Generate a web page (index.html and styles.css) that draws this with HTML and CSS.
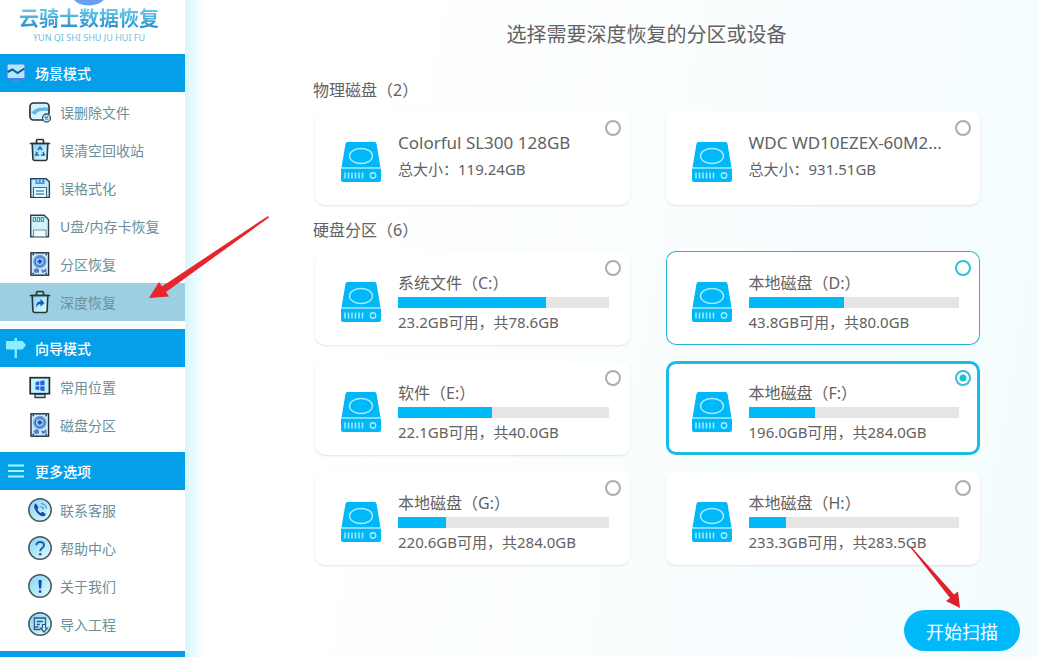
FILE: index.html
```html
<!DOCTYPE html>
<html lang="zh-CN">
<head>
  <meta charset="UTF-8">
  <meta name="viewport" content="width=device-width, initial-scale=1.0">
  <title>云骑士数据恢复</title>
  <link rel="stylesheet" href="styles.css">
</head>
<body>
  <!-- Shared icons -->
  <svg class="defs" aria-hidden="true">
    <defs>
      <linearGradient id="aqua" x1="0" y1="0" x2="1" y2="1">
        <stop offset="0" stop-color="#7fd4f7"/>
        <stop offset="1" stop-color="#e4fff8"/>
      </linearGradient>
    </defs>
    <symbol id="disk" viewBox="0 0 40 40">
      <path d="M6.500 0h27a2 2 0 0 1 2 1.700L39.500 25.500H.5L4.500 1.700A2 2 0 0 1 6.500 0z" fill="#00b7f8"/>
      <path d="M0 26.500h40V38a2 2 0 0 1-2 2H2a2 2 0 0 1-2-2z" fill="#00b7f8"/>
      <ellipse cx="20" cy="14" rx="11.500" ry="7.500" fill="none" stroke="#a5eaff" stroke-width="1.400"/>
      <path d="M4 30.500v6M7.500 30.500v6M11 30.500v6M14.500 30.500v6M18 30.500v6M21.500 30.500v6" stroke="#a5eaff" stroke-width="1.500"/>
      <circle cx="32" cy="33.500" r="2.700" fill="none" stroke="#a5eaff" stroke-width="1.400"/>
    </symbol>
    <symbol id="hdd" viewBox="0 0 24 24">
      <rect x="3" y="0.800" width="17.600" height="22.400" fill="#c5eafa" stroke="#222f45" stroke-width="1.400"/>
      <circle cx="11.800" cy="9.500" r="6.700" fill="#6f9fe0"/>
      <circle cx="11.800" cy="9.500" r="4.500" fill="#8bcdf2" stroke="#3b5cae"/>
      <path d="M11.800 7l2.500 2.500-2.500 2.500-2.500-2.500z" fill="#2447bd"/>
      <path d="M5.500 18l3-2 2.500 1.500v3l-4 .5zM13 17.500l3 .5 2-2 .5 3.500-4 1.500z" fill="#557bc5"/>
      <path d="M4.500 2.500h1.500M17.500 2.500h1.500M4.500 21.500h1.500M17.500 21.500h1.500" stroke="#222f45" stroke-width="1.300"/>
    </symbol>
    <symbol id="trash" viewBox="0 0 24 24">
      <path d="M4.200 5.500h15.600l-.7 15q-.2 2-2 2H6.900q-1.800 0-2-2z" fill="url(#aqua)" stroke="#2c343b" stroke-width="1.600"/>
      <path d="M2.500 5.500h19M8.500 5V2.700q0-1.200 1.200-1.200h4.600q1.200 0 1.200 1.200V5" fill="none" stroke="#2c343b" stroke-width="1.700" stroke-linecap="round"/>
    </symbol>
  </svg>

  <div class="app">
    <aside class="sidebar">
      <div class="brand">
        <svg class="brand-mark" viewBox="0 0 36 8" aria-hidden="true">
          <path d="M5-4C7 4 28 4 31-4" fill="none" stroke="#6b9df0" stroke-width="7"/>
        </svg>
        <div class="brand-name">云骑士数据恢复</div>
        <div class="brand-sub">YUN QI SHI SHU JU HUI FU</div>
      </div>

      <nav>
        <section class="menu">
          <h2 class="menu-title">
            <svg class="menu-icon" viewBox="0 0 20 20" aria-hidden="true">
              <rect x="1" y="1" width="18" height="14.500" rx="1" fill="#ace9fb" stroke="#4680e8" stroke-width="1.200"/>
              <path d="M1.500 9l5-2.500 5 3.500 7-4.500" fill="none" stroke="#214fae" stroke-width="2"/>
              <path d="M6 18h8" stroke="#5487ef" stroke-width="1.500"/>
            </svg>
            场景模式
          </h2>
          <ul class="menu-list">
            <li><a class="menu-item" href="#">
              <svg class="item-icon" viewBox="0 0 24 24" aria-hidden="true">
                <path d="M16 20H5.500A3.500 3.500 0 0 1 2 16.500v-10A3.500 3.500 0 0 1 5.500 3h12A3.500 3.500 0 0 1 21 6.500V14" fill="#d4f4ff" stroke="#2c343b" stroke-width="1.700"/>
                <path d="M3.500 12.500C8 7 13 7.500 20 7.500V11c-7-1-11 0-13 4" fill="#66b4df"/>
                <circle cx="18.500" cy="18" r="4" fill="#bdeafb" stroke="#40536b" stroke-width="1.300"/>
                <path d="M17 16.500l3 3M20 16.500l-3 3" stroke="#3478d0" stroke-width="1.200"/>
              </svg>
              误删除文件</a></li>
            <li><a class="menu-item" href="#">
              <svg class="item-icon" viewBox="0 0 24 24" aria-hidden="true">
                <use href="#trash"/>
                <path d="M10 12l2-3 2 3M15 14l1.300 3H13M11 17H7.700L9.300 14" fill="none" stroke="#2862c8" stroke-width="1.600"/>
              </svg>
              误清空回收站</a></li>
            <li><a class="menu-item" href="#">
              <svg class="item-icon" viewBox="0 0 24 24" aria-hidden="true">
                <path d="M2.700 2.700h15.500l3.200 3.200v15.500H2.700z" fill="#c2effb" stroke="#2b3f52" stroke-width="1.400"/>
                <path d="M7.500 3v5h9V3z" fill="#4c92e0"/>
                <path d="M10 3.500v3M13.500 3.500v3" stroke="#d4f4ff" stroke-width="1.200"/>
                <path d="M5.500 21v-9.500h13V21" fill="#e8fbff" stroke="#4b6a84" stroke-width="1.200"/>
                <path d="M8 15h8M8 18h8" stroke="#4b8fd8" stroke-width="1.500"/>
              </svg>
              误格式化</a></li>
            <li><a class="menu-item" href="#">
              <svg class="item-icon" viewBox="0 0 24 24" aria-hidden="true">
                <path d="M2.700 1.200h13.500l4.300 4.300v17.300H2.700z" fill="#d0f5fb" stroke="#2b3f52" stroke-width="1.400"/>
                <path d="M5.300 3.500h2.200v4H5.300zM9.300 3.500h2.200v4H9.300zM13.300 3.500h2.200v4h-2.200z" fill="none" stroke="#478ddc" stroke-width="1.200"/>
                <path d="M5.500 22.500v-6.500h12.500v6.500" fill="#f2fdff" stroke="#7894a5" stroke-width="1.200"/>
              </svg>
              U盘/内存卡恢复</a></li>
            <li><a class="menu-item" href="#">
              <svg class="item-icon" viewBox="0 0 24 24" aria-hidden="true"><use href="#hdd"/></svg>
              分区恢复</a></li>
            <li><a class="menu-item active" href="#" aria-current="page">
              <svg class="item-icon" viewBox="0 0 24 24" aria-hidden="true">
                <use href="#trash"/>
                <path d="M8 18c0-4.500 1.500-6.500 4.500-6.500V9l4 4-4 3.500V14c-2 0-3.500 1-4.500 4z" fill="#1d52c0"/>
              </svg>
              深度恢复</a></li>
          </ul>
        </section>

        <section class="menu">
          <h2 class="menu-title">
            <svg class="menu-icon" viewBox="0 0 20 20" aria-hidden="true">
              <path d="M8.500 0h2.500v20H8.500z" fill="#7cecff"/>
              <path d="M0 3h16.500l3.500 4-3.500 4.500H0z" fill="#8deeff"/>
            </svg>
            向导模式
          </h2>
          <ul class="menu-list">
            <li><a class="menu-item" href="#">
              <svg class="item-icon" viewBox="0 0 24 24" aria-hidden="true">
                <path d="M7 19h10v3.500H7z" fill="#c5f0fa" stroke="#2c3c4d" stroke-width="1.300"/>
                <rect x="2.200" y="2.700" width="19.200" height="16" fill="#c5f3fd" stroke="#222d3a" stroke-width="1.700"/>
                <path d="M7.500 7l3.800-.7v4H7.500zM12.300 6l4.200-.7v5h-4.200zM7.500 11.300h3.800v4l-3.800-.7zM12.300 11.300h4.200v5l-4.200-.7z" fill="#2563e0"/>
              </svg>
              常用位置</a></li>
            <li><a class="menu-item" href="#">
              <svg class="item-icon" viewBox="0 0 24 24" aria-hidden="true"><use href="#hdd"/></svg>
              磁盘分区</a></li>
          </ul>
        </section>

        <section class="menu">
          <h2 class="menu-title">
            <svg class="menu-icon" viewBox="0 0 20 20" aria-hidden="true">
              <path d="M2 4.500h16M2 10h16M2 15.500h16" stroke="#a9f2ff" stroke-width="2"/>
            </svg>
            更多选项
          </h2>
          <ul class="menu-list">
            <li><a class="menu-item" href="#">
              <svg class="item-icon" viewBox="0 0 24 24" aria-hidden="true">
                <circle cx="12" cy="12" r="11.200" fill="url(#aqua)" stroke="#465a60" stroke-width="1.500"/>
                <path d="M8 5.500c-2 1-2.500 3-1 6 1.700 3.500 4 5.700 7 6.700 2 .5 3.500-.7 3.700-2.200l-3.200-2.200-1.800 1.300c-1.500-.8-2.800-2.300-3.300-3.800l1.300-1.500z" fill="#1b46bd"/>
                <path d="M12.500 8.500q2.500.3 3 3M13 5.500q4.500.5 5.500 5" fill="none" stroke="#4b8bd5" stroke-width="1.200"/>
              </svg>
              联系客服</a></li>
            <li><a class="menu-item" href="#">
              <svg class="item-icon" viewBox="0 0 24 24" aria-hidden="true">
                <circle cx="12" cy="12" r="11.200" fill="url(#aqua)" stroke="#465a60" stroke-width="1.500"/>
                <path d="M8.300 9.300C8.300 4.800 16 5 16 9.200c0 2.800-3.800 2.800-3.800 6" fill="none" stroke="#2458a8" stroke-width="2"/>
                <circle cx="12.200" cy="18.300" r="1.300" fill="#2458a8"/>
              </svg>
              帮助中心</a></li>
            <li><a class="menu-item" href="#">
              <svg class="item-icon" viewBox="0 0 24 24" aria-hidden="true">
                <circle cx="12" cy="12" r="11.200" fill="url(#aqua)" stroke="#465a60" stroke-width="1.500"/>
                <path d="M10.500 6h3.200l-.5 8.500H11zM10.900 16.300h2.400v2.400h-2.400z" fill="#1c3fc4"/>
              </svg>
              关于我们</a></li>
            <li><a class="menu-item" href="#">
              <svg class="item-icon" viewBox="0 0 24 24" aria-hidden="true">
                <circle cx="12" cy="12" r="11.200" fill="url(#aqua)" stroke="#465a60" stroke-width="1.500"/>
                <path d="M12.500 17.500H6.300V6h11.200v6M8.800 9.500H15M8.800 12.500h3M6.300 15h4" fill="none" stroke="#31588d" stroke-width="1.300"/>
                <path d="M14.500 12.500h3v3.500h2l-3.500 4-3.500-4h2z" fill="#d0f4ff" stroke="#31588d" stroke-width="1.200"/>
              </svg>
              导入工程</a></li>
          </ul>
        </section>

        <section class="menu">
          <h2 class="menu-title"></h2>
        </section>
      </nav>
    </aside>

    <main class="main">
      <div class="content">
        <h1>选择需要深度恢复的分区或设备</h1>

        <section class="group">
          <h2 class="group-title">物理磁盘（2）</h2>
          <div class="cards">
            <label class="card">
              <svg class="disk" aria-hidden="true"><use href="#disk"/></svg>
              <span class="info device">
                <span class="name">Colorful SL300 128GB</span>
                <span class="size">总大小：119.24GB</span>
              </span>
              <input class="radio" type="radio" name="target">
            </label>
            <label class="card">
              <svg class="disk" aria-hidden="true"><use href="#disk"/></svg>
              <span class="info device">
                <span class="name">WDC WD10EZEX-60M2...</span>
                <span class="size">总大小：931.51GB</span>
              </span>
              <input class="radio" type="radio" name="target">
            </label>
          </div>
        </section>

        <section class="group">
          <h2 class="group-title">硬盘分区（6）</h2>
          <div class="cards">
            <label class="card">
              <svg class="disk" aria-hidden="true"><use href="#disk"/></svg>
              <span class="info">
                <span class="name">系统文件（C:）</span>
                <span class="bar"><span class="used" style="width: 70.5%"></span></span>
                <span class="size">23.2GB可用，共78.6GB</span>
              </span>
              <input class="radio" type="radio" name="target">
            </label>
            <label class="card highlight">
              <svg class="disk" aria-hidden="true"><use href="#disk"/></svg>
              <span class="info">
                <span class="name">本地磁盘（D:）</span>
                <span class="bar"><span class="used" style="width: 45.5%"></span></span>
                <span class="size">43.8GB可用，共80.0GB</span>
              </span>
              <input class="radio" type="radio" name="target">
            </label>
            <label class="card">
              <svg class="disk" aria-hidden="true"><use href="#disk"/></svg>
              <span class="info">
                <span class="name">软件（E:）</span>
                <span class="bar"><span class="used" style="width: 44.8%"></span></span>
                <span class="size">22.1GB可用，共40.0GB</span>
              </span>
              <input class="radio" type="radio" name="target">
            </label>
            <label class="card selected">
              <svg class="disk" aria-hidden="true"><use href="#disk"/></svg>
              <span class="info">
                <span class="name">本地磁盘（F:）</span>
                <span class="bar"><span class="used" style="width: 31.6%"></span></span>
                <span class="size">196.0GB可用，共284.0GB</span>
              </span>
              <input class="radio" type="radio" name="target" checked>
            </label>
            <label class="card">
              <svg class="disk" aria-hidden="true"><use href="#disk"/></svg>
              <span class="info">
                <span class="name">本地磁盘（G:）</span>
                <span class="bar"><span class="used" style="width: 22.8%"></span></span>
                <span class="size">220.6GB可用，共284.0GB</span>
              </span>
              <input class="radio" type="radio" name="target">
            </label>
            <label class="card">
              <svg class="disk" aria-hidden="true"><use href="#disk"/></svg>
              <span class="info">
                <span class="name">本地磁盘（H:）</span>
                <span class="bar"><span class="used" style="width: 17.7%"></span></span>
                <span class="size">233.3GB可用，共283.5GB</span>
              </span>
              <input class="radio" type="radio" name="target">
            </label>
          </div>
        </section>
      </div>

      <div class="actions">
        <button class="scan" type="button">开始扫描</button>
      </div>
    </main>

    <!-- Pointer arrows -->
    <svg class="arrow arrow-menu" viewBox="0 0 120 83" aria-hidden="true">
      <path d="M119 0L120 1.500 17 76 20 80.500 0 82 10 66 13 70.500z" fill="#e8242c"/>
    </svg>
    <svg class="arrow arrow-scan" viewBox="0 0 50 61" aria-hidden="true">
      <path d="M0 0L1.500 0 44 47.500 48 44.500 50 61 36 54 40 51z" fill="#dd2029"/>
    </svg>
  </div>
</body>
</html>
```

FILE: styles.css
```css
* {
  box-sizing: border-box;
}
body {
  margin: 0;
  font-family: "Noto Sans", "Noto Sans CJK SC", sans-serif;
  font-size: 14px;
  color: #626262;
  background: #fff;
}
h1, h2, ul {
  margin: 0;
  padding: 0;
  font-weight: normal;
}
.defs {
  position: absolute;
  width: 0;
  height: 0;
}
.app {
  position: relative;
  display: flex;
  height: 100vh;
  overflow: hidden;
}

/* Sidebar */
.sidebar {
  flex: 0 0 185px;
  background: #fff;
}
.brand {
  display: flex;
  flex-direction: column;
  align-items: center;
  height: 54px;
  padding-right: 7px;
}
.brand-mark {
  width: 36px;
  height: 8px;
}
.brand-name {
  font-family: "Liberation Sans", "Noto Sans CJK SC", sans-serif;
  font-size: 20px;
  font-weight: bold;
  line-height: 22px;
  background: linear-gradient(#67cfea, #2588c9);
  background-clip: text;
  -webkit-background-clip: text;
  color: transparent;
}
.brand-sub {
  font-size: 9px;
  line-height: 16px;
  color: #70c0da;
}
.menu {
  margin-bottom: 7px;
}
.menu-title {
  display: flex;
  align-items: center;
  gap: 9px;
  height: 38px;
  padding-left: 6px;
  background: #03a0e9;
  color: #fff;
  font-size: 14px;
  font-weight: 500;
}
.menu-icon {
  width: 20px;
  height: 20px;
}
.menu-list {
  padding: 1px 0;
  list-style: none;
}
.menu-item {
  display: flex;
  align-items: center;
  gap: 8px;
  height: 38px;
  padding-left: 28px;
  color: #6b8f9b;
  text-decoration: none;
}
.menu-item.active {
  background: #9ccfe1;
}
.item-icon {
  width: 24px;
  height: 24px;
}

/* Main panel */
.main {
  flex: 1;
  min-width: 0;
  background:
    linear-gradient(90deg, #d5f6fc, rgba(255, 255, 255, 0) 20px),
    linear-gradient(100deg, #fff 15%, #f9fdfe 60%, #f3fcfe);
}
.content {
  padding: 20px 58px 0 128px;
}
h1 {
  margin-bottom: 28px;
  font-size: 20px;
  line-height: 30px;
  text-align: center;
}
.group {
  margin-bottom: 13px;
}
.group-title {
  margin-bottom: 9px;
  font-size: 16px;
  line-height: 24px;
}
.cards {
  display: grid;
  grid-template-columns: 1fr 1fr;
  gap: 16px 36px;
  padding-left: 2px;
}
.card {
  position: relative;
  display: flex;
  align-items: center;
  gap: 17px;
  height: 94px;
  padding: 8px 21px 0 26px;
  border-radius: 10px;
  background: #fff;
  box-shadow: 0 1px 2px rgba(70, 100, 110, 0.16);
}
.card.highlight {
  box-shadow: inset 0 0 0 1px #27b3d3;
}
.card.selected {
  box-shadow: inset 0 0 0 3px #1bbbe3;
}
.disk {
  flex: none;
  width: 40px;
  height: 40px;
}
.info {
  flex: 1;
  min-width: 0;
}
.info.device {
  padding-bottom: 12px;
}
.name, .size, .bar, .used {
  display: block;
}
.name {
  font-size: 16px;
  line-height: 20px;
  white-space: nowrap;
}
.device .name {
  margin-bottom: 6px;
  font-size: 17px;
}
.size {
  font-size: 15px;
  line-height: 20px;
}
.bar {
  height: 11px;
  margin: 4px 0;
  background: #e5e5e5;
}
.used {
  height: 11px;
  background: #00b9f8;
}
.radio {
  position: absolute;
  top: 9px;
  right: 9px;
  appearance: none;
  width: 16px;
  height: 16px;
  margin: 0;
  border: 2px solid #adadad;
  border-radius: 50%;
  background: #fff;
}
.highlight .radio, .radio:checked {
  border-color: #35bfd8;
}
.radio:checked {
  background: radial-gradient(circle, #18bdd6 3px, #fff 4px);
}
.actions {
  display: flex;
  justify-content: flex-end;
  padding: 32px 18px 0;
}
.scan {
  height: 41px;
  padding: 0 22px;
  border: none;
  border-radius: 21px;
  background: #00b9fb;
  color: #fff;
  font-family: inherit;
  font-size: 18px;
  cursor: pointer;
}

/* Arrows drawn over the page */
.arrow {
  position: absolute;
  pointer-events: none;
}
.arrow-menu {
  left: 149px;
  top: 216px;
  width: 120px;
  height: 83px;
}
.arrow-scan {
  left: 910px;
  top: 547px;
  width: 50px;
  height: 61px;
}
```
